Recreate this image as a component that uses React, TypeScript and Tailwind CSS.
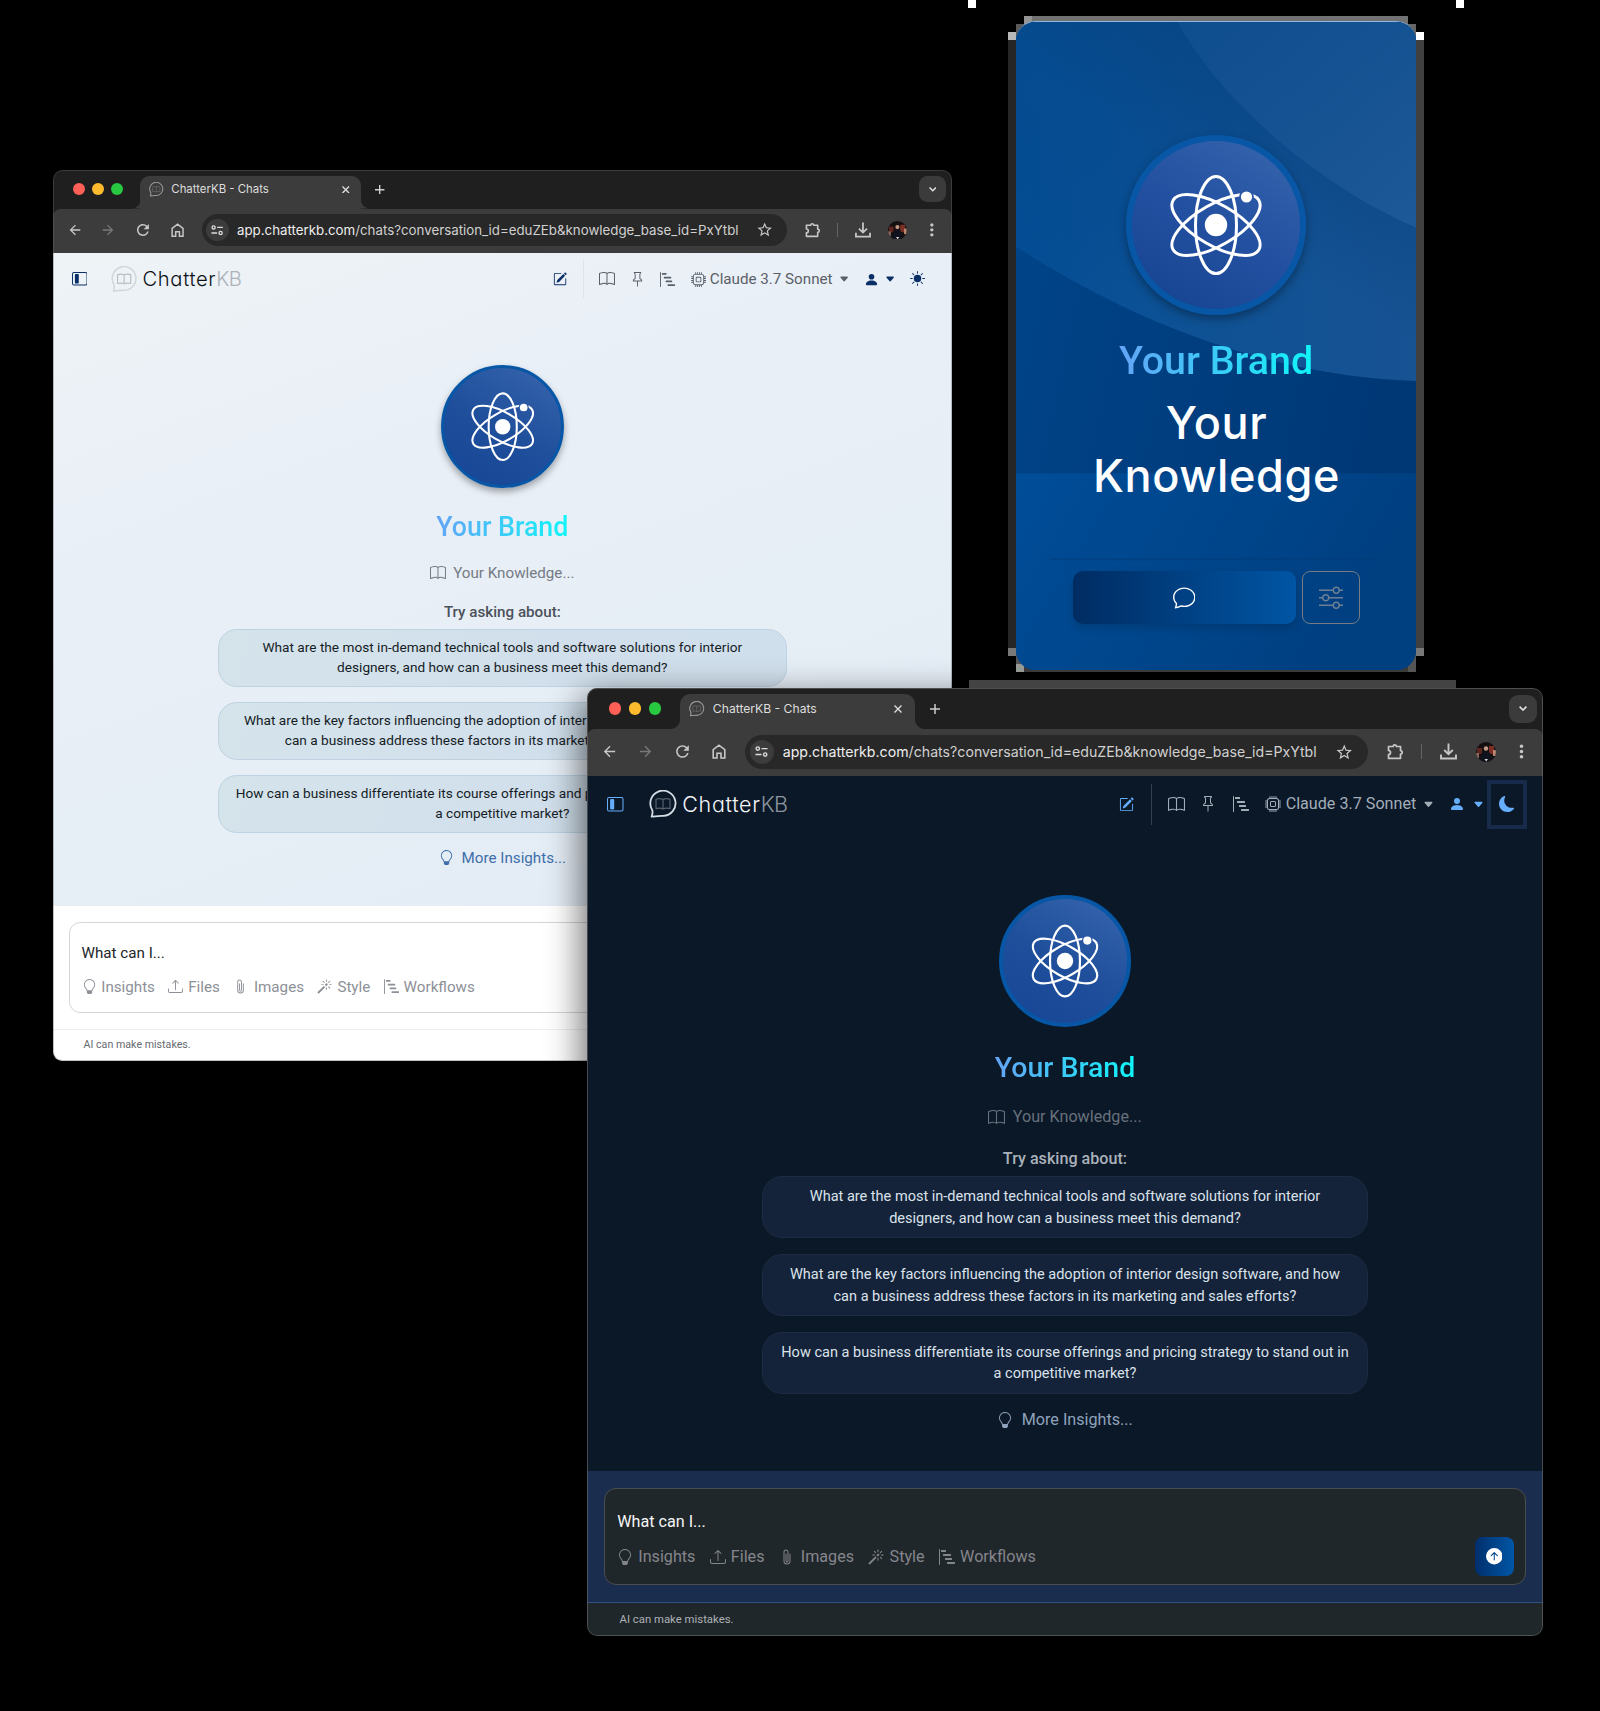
import React from "react";
import {
  BsArrowUpCircleFill,
  BsBarChartSteps,
  BsBook,
  BsCaretDownFill,
  BsChat,
  BsCpu,
  BsLayoutSidebarInset,
  BsLightbulb,
  BsMagic,
  BsMoonFill,
  BsPaperclip,
  BsPencilSquare,
  BsPersonFill,
  BsPin,
  BsSliders,
  BsSunFill,
  BsUpload,
} from "react-icons/bs";
import { MdArrowBack, MdArrowForward, MdMoreVert, MdRefresh, MdStarBorder } from "react-icons/md";

const INTER = "font-['Inter',sans-serif]";

type Theme = {
  dark: boolean;
  page: string;
  accent: string;
  muted: string;
  headerLine: string;
  logoName: string;
  logoSuffix: string;
  bubble: string;
  bubbleBook: string;
  bubbleWidth: number;
  knowledge: string;
  tryAsking: string;
  pill: string;
  more: string;
  composer: string;
  box: string;
  prompt: string;
  tools: string;
  footer: string;
  frame: string;
};

const LIGHT: Theme = {
  dark: false,
  page: "bg-[linear-gradient(160deg,#eef3f6_0%,#e9eff7_35%,#e6eef6_65%,#e2eaf4_100%)]",
  accent: "text-[#0a2f66]",
  muted: "text-[#5a6068]",
  headerLine: "bg-[#dfe4ea]",
  logoName: "text-[#0c1118]",
  logoSuffix: "text-[#aeb3b9]",
  bubble: "#d0d5db",
  bubbleBook: "#b9bec5",
  bubbleWidth: 1.5,
  knowledge: "text-[#757b84]",
  tryAsking: "text-[#4b515a]",
  pill: "border-[#bed2e2] bg-[linear-gradient(110deg,#d5e4eb_0%,#d0dfeb_60%,#d0dfec_100%)] pb-[1.500px] text-[#161d26]",
  more: "text-[#3e6fab]",
  composer: "border-[#eeeff1] bg-white",
  box: "border-[#d3d6d9] bg-white",
  prompt: "text-[#212529]",
  tools: "text-[#8d9097]",
  footer: "bg-white pb-[2px] text-[#666a70]",
  frame: "border-[#6a6a6a]/40",
};

const DARK: Theme = {
  dark: true,
  page: "bg-[#0b1828]",
  accent: "text-[#65aefc]",
  muted: "text-[#a3adb8]",
  headerLine: "bg-[#333f4c]",
  logoName: "text-[#f3f5f8]",
  logoSuffix: "text-[#8c959f]",
  bubble: "#d5dde6",
  bubbleBook: "#55606c",
  bubbleWidth: 1.8,
  knowledge: "text-[#67717b]",
  tryAsking: "text-[#a9b1ba]",
  pill: "border-[#1c2b40] bg-[#14233a] pt-[1.500px] text-[#dbe2ea]",
  more: "text-[#8fa3bb]",
  composer: "border-[#2f5080] bg-[#1a2d4e]",
  box: "border-[#4a4e50] bg-[#20272a]",
  prompt: "text-[#f5f6f7]",
  tools: "text-[#85868d]",
  footer: "bg-[#20272a] text-[#adb1b5]",
  frame: "border-[#6e6e6e]/60",
};

function Atom({ id, className }: { id: string; className: string }) {
  return (
    <svg viewBox="-52 -52 104 104" className={className} fill="none">
      <mask id={id} maskUnits="userSpaceOnUse" x="-52" y="-52" width="104" height="104">
        <rect x="-52" y="-52" width="104" height="104" fill="#fff" />
        <circle cx="30.5" cy="-28" r="7.4" fill="#000" />
      </mask>
      <g stroke="#fff" strokeWidth="3" mask={`url(#${id})`}>
        <ellipse rx="20.5" ry="48.5" />
        <ellipse rx="20.5" ry="49.5" transform="rotate(60)" />
        <ellipse rx="20.5" ry="49.5" transform="rotate(-60)" />
      </g>
      <circle r="11.2" fill="#fff" />
      <circle cx="30.5" cy="-28" r="5.6" fill="#fff" />
    </svg>
  );
}

function LogoBubble({ stroke, book, width, className }: { stroke: string; book: string; width: number; className: string }) {
  return (
    <svg viewBox="0 0 28 28" className={className} fill="none" strokeLinejoin="round" strokeLinecap="round">
      <path
        d="M3.2 20.2A12.6 12.6 0 1 1 14.2 26.2C10.8 25.9 7 26.6 2.6 27 3.6 24.6 3.9 22.6 3.2 20.2Z"
        stroke={stroke}
        strokeWidth={width}
        transform="translate(0 -.3)"
      />
      <path
        d="M14 9.6C12 8.4 9.4 8.4 7 9.2V18.6C9.4 18 12 18 14 19 16 18 18.6 18 21 18.6V9.2C18.6 8.4 16 8.4 14 9.6ZM14 9.6V19"
        stroke={book}
        strokeWidth="1.2"
      />
    </svg>
  );
}

function TabStrip() {
  return (
    <div className="flex h-[41px] items-center bg-[#1f1f1f]">
      <div className="ml-[21.500px] flex gap-[7.600px]">
        <span className="size-[12.500px] rounded-full bg-[#fe5f57]" />
        <span className="size-[12.500px] rounded-full bg-[#febb2e]" />
        <span className="size-[12.500px] rounded-full bg-[#28c840]" />
      </div>
      <div className="relative ml-[18.700px] mt-[6px] flex h-[35px] w-[235px] items-center rounded-t-[10px] bg-[#3c3c3c] pb-[5px]">
        <svg viewBox="0 0 9 9" className="absolute -left-[9px] bottom-0 size-[9px]">
          <path d="M9 0V9H0A9 9 0 0 0 9 0Z" fill="#3c3c3c" />
        </svg>
        <svg viewBox="0 0 9 9" className="absolute -right-[9px] bottom-0 size-[9px]">
          <path d="M0 0V9H9A9 9 0 0 1 0 0Z" fill="#3c3c3c" />
        </svg>
        <LogoBubble stroke="#9a9a9a" book="#6f6f6f" width={2} className="ml-[9.200px] size-[15.500px]" />
        <span className={`${INTER} ml-[8.300px] whitespace-nowrap text-[12.150px] leading-4 text-[#dedede]`}>ChatterKB - Chats</span>
        <svg viewBox="0 0 8 8" className="ml-auto mr-[12.400px] size-[8px]" stroke="#dedede" strokeWidth="1.4">
          <path d="M.5.5 7.500 7.500M7.500.5.5 7.500" />
        </svg>
      </div>
      <svg viewBox="0 0 10 10" className="ml-[14.900px] size-[10px]" stroke="#cfcfcf" strokeWidth="1.5">
        <path d="M5 0V10M0 5H10" />
      </svg>
      <div className="ml-auto mr-[6.300px] flex size-[28px] items-center justify-center rounded-[9px] bg-[#3b3b3b]">
        <svg viewBox="0 0 8 5" className="w-[8px]" fill="none" stroke="#e2e2e2" strokeWidth="1.6">
          <path d="M.6.6 4 4 7.400.6" />
        </svg>
      </div>
    </div>
  );
}

function Toolbar() {
  return (
    <div className="bg-[#1f1f1f]">
      <div className="flex h-[47px] items-center rounded-t-[8px] bg-[#3c3c3c] pb-[1.200px] text-[#c7c7c7]">
        <MdArrowBack className="ml-[14.400px] size-[17px]" />
        <MdArrowForward className="ml-[18.900px] size-[17px] text-[#787878]" />
        <MdRefresh className="ml-[18.900px] size-[19px]" />
        <svg viewBox="0 0 14 15" className="ml-[20px] h-[15px] w-[14px]" fill="none" stroke="currentColor" strokeWidth="1.6">
          <path d="M1.2 14V5.7L7 1.2 12.8 5.7V14H9V9.2H5V14Z" />
        </svg>
        <div className="ml-[18.900px] flex h-[34.500px] w-[622.700px] items-center rounded-full bg-[#282828]">
          <div className="ml-[4.700px] flex size-[24px] items-center justify-center rounded-full bg-[#3c3c3c]">
            <svg viewBox="0 0 14 12" className="w-[13px]" fill="none" stroke="#dcdcdc" strokeWidth="1.5">
              <circle cx="3" cy="2.8" r="1.8" />
              <path d="M7 2.8H13.5M.5 9.2H7" />
              <circle cx="11" cy="9.2" r="1.8" />
            </svg>
          </div>
          <span className={`${INTER} ml-[9px] whitespace-nowrap text-[14.170px] leading-5 text-[#d0d0d0]`}>
            <span className="text-[#eeeeee]">app.chatterkb.com</span>/chats?conversation_id=eduZEb&amp;knowledge_base_id=PxYtbl
          </span>
          <MdStarBorder className="ml-auto mr-[14.500px] size-[18.500px]" />
        </div>
        <svg viewBox="0 0 17 17" className="ml-[19px] size-[17px]" fill="none" stroke="currentColor" strokeWidth="1.7" strokeLinejoin="round">
          <path d="M1.5 3.5H6.2A1.6 1.6 0 0 1 9.4 3.5H13.5V7.6A1.6 1.6 0 0 1 13.5 11V15.300H1.5V11.500A2 2 0 0 0 1.5 7.500Z" />
        </svg>
        <span className="ml-[17px] h-[15px] w-[1.500px] bg-[#656565]" />
        <svg viewBox="0 0 17 17" className="ml-[18px] size-[17px]" fill="none" stroke="currentColor" strokeWidth="1.9">
          <path d="M8.500.5V11M4.200 7 8.500 11.200 12.800 7M1 11.500V15.500H16V11.500" />
        </svg>
        <svg viewBox="0 0 20 20" className="ml-[18.300px] size-[20px]">
          <clipPath id="avatar">
            <circle cx="10" cy="10" r="10" />
          </clipPath>
          <g clipPath="url(#avatar)">
            <rect width="20" height="20" fill="#15100f" />
            <rect x="1" y="6" width="5" height="6" fill="#5e2420" />
            <rect x="13" y="4" width="5" height="8" fill="#7e2f25" />
            <rect x="17" y="8" width="3" height="6" fill="#b98673" />
            <rect y="11" width="3" height="5" fill="#8c6c62" />
            <circle cx="10" cy="6.5" r="2.2" fill="#c39a86" />
            <path d="M5 20V12Q10 6 15 12V20Z" fill="#10131d" />
            <path d="M8.500 17H12L10.200 19.500Z" fill="#d8d8d8" />
          </g>
        </svg>
        <MdMoreVert className="ml-[15.500px] size-[21px]" />
      </div>
    </div>
  );
}

function AppHeader({ t }: { t: Theme }) {
  return (
    <div className={`flex h-[56px] shrink-0 items-center ${t.muted}`}>
      <BsLayoutSidebarInset className={`ml-[20px] size-[16.500px] ${t.accent}`} />
      <LogoBubble stroke={t.bubble} book={t.bubbleBook} width={t.bubbleWidth} className="ml-[25.200px] size-[28px]" />
      <span
        className={`${INTER} ml-[5.500px] whitespace-nowrap text-[21.500px] font-light leading-7 tracking-[0.700px] [font-feature-settings:'cv11'] ${t.logoName}`}
      >
        Chatter<span className={`tracking-[-0.500px] ${t.logoSuffix}`}>KB</span>
      </span>
      <BsPencilSquare className={`ml-auto size-[15px] ${t.accent}`} />
      <span className={`ml-[17px] h-[41px] w-px ${t.headerLine}`} />
      <BsBook className="ml-[16px] size-[17px]" />
      <BsPin className="ml-[15.300px] size-[16px]" />
      <BsBarChartSteps className="ml-[16.400px] size-[16px]" />
      <BsCpu className="ml-[16.300px] size-[16px]" />
      <span className="ml-[4.500px] w-[130.200px] whitespace-nowrap text-[16.150px] leading-6">Claude 3.7 Sonnet</span>
      <BsCaretDownFill className="ml-[7.500px] size-[11px]" />
      <BsPersonFill className={`ml-[15px] size-[16px] ${t.accent}`} />
      <BsCaretDownFill className={`ml-[7.200px] size-[11px] ${t.accent}`} />
      <span
        className={`ml-[3.500px] mr-[15.700px] flex h-[49px] w-[40.300px] items-center justify-center border-[4px] ${
          t.dark ? "border-[#182b4b]" : "border-transparent"
        }`}
      >
        {t.dark ? <BsMoonFill className={`size-[16px] ${t.accent}`} /> : <BsSunFill className={`size-[16px] ${t.accent}`} />}
      </span>
    </div>
  );
}

const QUESTIONS = [
  ["What are the most in-demand technical tools and software solutions for interior", "designers, and how can a business meet this demand?"],
  ["What are the key factors influencing the adoption of interior design software, and how", "can a business address these factors in its marketing and sales efforts?"],
  ["How can a business differentiate its course offerings and pricing strategy to stand out in", "a competitive market?"],
];

function Home({ t }: { t: Theme }) {
  return (
    <div className="flex flex-col items-center">
      <div
        className={`mt-[63px] flex size-[131.500px] items-center justify-center rounded-full border-[4px] border-[#0757a6] bg-[linear-gradient(30deg,#174796_10%,#204f9c_50%,#3866ae_100%)] ${
          t.dark ? "" : "shadow-[0_4px_8px_rgba(0,0,0,0.35)]"
        }`}
      >
        <Atom id={t.dark ? "atom-dark" : "atom-light"} className="size-[76px]" />
      </div>
      <div className="mt-[25px] bg-[linear-gradient(90deg,#64a4f7,#10f5f8)] bg-clip-text text-[28.500px] font-medium leading-8 text-transparent">
        Your Brand
      </div>
      <div className={`mt-[21.500px] flex items-center gap-[7.500px] text-[16.150px] leading-6 ${t.knowledge}`}>
        <BsBook className="size-[17px]" />
        Your Knowledge...
      </div>
      <div className={`mt-[18px] text-[16.150px] font-medium leading-6 ${t.tryAsking}`}>Try asking about:</div>
      <div className="mt-[5px] flex flex-col gap-[15.500px]">
        {QUESTIONS.map(([first, second]) => (
          <div
            key={first}
            className={`flex h-[62.300px] w-[606px] flex-col items-center justify-center whitespace-nowrap rounded-[20px] border text-[14.530px] leading-[21.700px] ${t.pill}`}
          >
            <span>{first}</span>
            <span>{second}</span>
          </div>
        ))}
      </div>
      <div className={`mt-[14px] flex items-center gap-[8.500px] text-[16.150px] leading-6 ${t.more}`}>
        <BsLightbulb className="size-[16px]" />
        More Insights...
      </div>
    </div>
  );
}

function Composer({ t }: { t: Theme }) {
  return (
    <>
      <div className={`h-[131.500px] shrink-0 border-b px-[16.800px] pt-[17px] ${t.composer}`}>
        <div className={`flex h-[97px] rounded-[12px] border pl-[12.500px] ${t.box}`}>
          <div>
            <div className={`mt-[20.500px] text-[16.150px] leading-6 ${t.prompt}`}>What can I...</div>
            <div className={`mt-[11.500px] flex items-center whitespace-nowrap text-[16.150px] leading-6 ${t.tools}`}>
              <BsLightbulb className="size-[16px]" />
              <span className="ml-[5px] w-[57.500px]">Insights</span>
              <BsUpload className="ml-[14px] size-[16px]" />
              <span className="ml-[5px] w-[33.500px]">Files</span>
              <BsPaperclip className="ml-[14.500px] size-[16px]" />
              <span className="ml-[6px] w-[53.500px]">Images</span>
              <BsMagic className="ml-[14px] size-[16px]" />
              <span className="ml-[5.300px] w-[35.200px]">Style</span>
              <BsBarChartSteps className="ml-[14px] size-[16px]" />
              <span className="ml-[5.300px]">Workflows</span>
            </div>
          </div>
          <div className="mb-[8px] ml-auto mr-[11.500px] mt-auto flex size-[39px] items-center justify-center rounded-[8px] bg-[linear-gradient(90deg,#002f6c,#0056a6)]">
            <BsArrowUpCircleFill className="size-[16.500px] text-white" />
          </div>
        </div>
      </div>
      <div className={`flex h-[33.500px] shrink-0 items-center pl-[32.500px] text-[11.350px] leading-4 ${t.footer}`}>AI can make mistakes.</div>
    </>
  );
}

function BrowserWindow({ theme: t }: { theme: Theme }) {
  return (
    <div className="relative flex h-[948px] w-[956px] flex-col overflow-hidden rounded-[10px] font-['Roboto',sans-serif]">
      <TabStrip />
      <Toolbar />
      <div className={`flex h-[695px] shrink-0 flex-col ${t.page}`}>
        <AppHeader t={t} />
        <Home t={t} />
      </div>
      <Composer t={t} />
      <div className={`absolute inset-0 rounded-[10px] border ${t.frame}`} />
    </div>
  );
}

function BrandCard() {
  return (
    <div className="relative h-[649px] w-[400px] overflow-hidden rounded-[20px] border-t border-[#8fb6dc] bg-[#00458a]">
      <svg viewBox="0 0 401 649" preserveAspectRatio="none" className="absolute inset-0 h-full w-full">
        <defs>
          <linearGradient id="band" x1="0" y1="0" x2="1" y2="0">
            <stop offset="0" stopColor="#02519a" />
            <stop offset=".5" stopColor="#0f5294" />
            <stop offset="1" stopColor="#175293" />
          </linearGradient>
          <linearGradient id="bandShade" x1="0" y1="0" x2=".6" y2="1">
            <stop offset="0" stopColor="#054a8c" stopOpacity=".8" />
            <stop offset=".5" stopColor="#06468a" stopOpacity=".35" />
            <stop offset="1" stopColor="#175293" stopOpacity="0" />
          </linearGradient>
          <linearGradient id="bandEdge" x1=".1" y1=".9" x2=".75" y2=".1">
            <stop offset=".55" stopColor="#08427f" stopOpacity="0" />
            <stop offset="1" stopColor="#08427f" stopOpacity=".75" />
          </linearGradient>
          <linearGradient id="corner" x1="0" y1="0" x2="1" y2="1">
            <stop offset="0" stopColor="#0e4d8e" />
            <stop offset="1" stopColor="#1d5898" />
          </linearGradient>
          <linearGradient id="deep" x1="0" y1="0" x2="1" y2=".35">
            <stop offset="0" stopColor="#00458a" />
            <stop offset="1" stopColor="#003876" />
          </linearGradient>
          <linearGradient id="floor" x1="0" y1="0" x2="1" y2=".3">
            <stop offset="0" stopColor="#004d98" />
            <stop offset="1" stopColor="#003f80" />
          </linearGradient>
        </defs>
        <rect width="401" height="649" fill="url(#deep)" />
        <path d="M0 0H401V359.500C290 356 150 322 0 225Z" fill="url(#band)" />
        <path d="M0 0H401V359.500C290 356 150 322 0 225Z" fill="url(#bandShade)" />
        <path d="M0 0H401V359.500C290 356 150 322 0 225Z" fill="url(#bandEdge)" />
        <path d="M162 0C200 70 290 157 401 206V0Z" fill="url(#corner)" />
        <rect y="452" width="401" height="197" fill="url(#floor)" />
        <rect x="35" y="537" width="330" height="2" fill="#003a78" opacity=".45" />
      </svg>
      <div className="relative flex flex-col items-center">
        <div className="mt-[113px] flex size-[180px] items-center justify-center rounded-full border-[6px] border-[#0757a6] bg-[linear-gradient(30deg,#184593_10%,#2350a0_50%,#3866ae_100%)] shadow-[0_4px_10px_rgba(0,0,0,0.35)]">
          <Atom id="atom-card" className="size-[104px]" />
        </div>
        <div className="mt-[22px] bg-[linear-gradient(90deg,#64a4f7,#10f5f8)] bg-clip-text font-['Roboto',sans-serif] text-[39.400px] font-medium leading-[48px] text-transparent">
          Your Brand
        </div>
        <div className={`${INTER} mt-[10.500px] pl-px text-center text-[45px] font-medium leading-[53.700px] tracking-[0.600px] text-white`}>
          Your
          <br />
          Knowledge
        </div>
        <div className="mt-[68px] flex gap-[6px]">
          <div className="flex h-[53px] w-[223px] items-center justify-center rounded-[10px] bg-[linear-gradient(90deg,#002c62,#0055a4)] shadow-[0_4px_8px_rgba(0,0,0,0.15)]">
            <BsChat className="size-[22.500px] text-white" />
          </div>
          <div className="flex h-[53px] w-[58px] items-center justify-center rounded-[8px] border border-[#757c83] text-[#6c7f93]">
            <BsSliders className="size-[24px]" />
          </div>
        </div>
      </div>
    </div>
  );
}

const FRINGE = [
  "left-[968px] top-0 h-[8px] w-[8px] bg-white",
  "left-[1456px] top-0 h-[8px] w-[8px] bg-white",
  "left-[1032px] top-[16px] h-[16px] w-[376px] bg-[#727272]",
  "left-[1024px] top-[16px] h-[8px] w-[8px] bg-[#949494]",
  "left-[1016px] top-[24px] h-[16px] w-[16px] bg-[#5a5a5a]",
  "left-[1400px] top-[24px] h-[16px] w-[16px] bg-[#666666]",
  "left-[1008px] top-[32px] h-[8px] w-[8px] bg-[#b8b8b8]",
  "left-[1416px] top-[32px] h-[8px] w-[8px] bg-white",
  "left-[1008px] top-[40px] h-[608px] w-[8px] bg-[#262626]",
  "left-[1416px] top-[40px] h-[608px] w-[8px] bg-[#404040]",
  "left-[1008px] top-[648px] h-[8px] w-[8px] bg-[#787878]",
  "left-[1416px] top-[648px] h-[8px] w-[8px] bg-[#787878]",
  "left-[1016px] top-[648px] h-[24px] w-[16px] bg-[#555555]",
  "left-[1016px] top-[664px] h-[8px] w-[8px] bg-[#959a95]",
  "left-[1400px] top-[648px] h-[24px] w-[16px] bg-[#555555]",
  "left-[1024px] top-[664px] h-[8px] w-[384px] bg-[#3a3a3a]",
  "left-[969px] top-[680px] h-[9px] w-[487px] bg-[#434343]",
];

export default function App() {
  return (
    <div className="relative h-[1711px] w-[1600px] overflow-hidden bg-black">
      <div className="absolute left-[53px] top-[170px]">
        <div className="[zoom:0.94]">
          <BrowserWindow theme={LIGHT} />
        </div>
      </div>
      <div className="absolute left-[587px] top-[688px] h-[948px] w-[956px] rounded-[10px] shadow-[0_14px_34px_6px_rgba(0,0,0,0.55)]" />
      {FRINGE.map((c) => (
        <span key={c} className={`absolute ${c}`} />
      ))}
      <div className="absolute left-[1016px] top-[21px]">
        <BrandCard />
      </div>
      <div className="absolute left-[587px] top-[688px]">
        <BrowserWindow theme={DARK} />
      </div>
    </div>
  );
}
